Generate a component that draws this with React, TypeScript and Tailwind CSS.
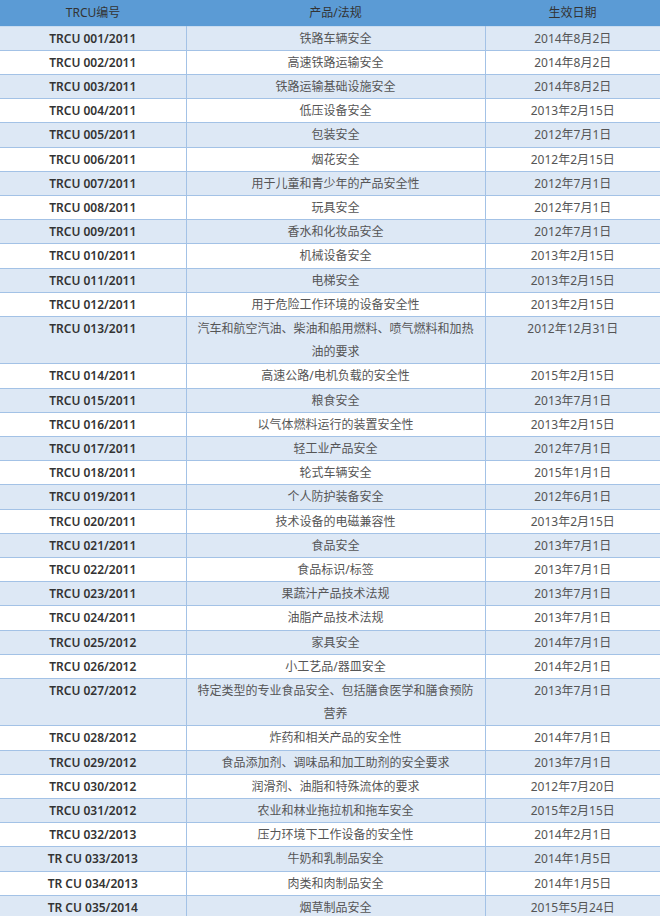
import React from 'react';

type Row = [string, string, string];

const rows: Row[] = [
  ['TRCU 001/2011', '铁路车辆安全', '2014年8月2日'],
  ['TRCU 002/2011', '高速铁路运输安全', '2014年8月2日'],
  ['TRCU 003/2011', '铁路运输基础设施安全', '2014年8月2日'],
  ['TRCU 004/2011', '低压设备安全', '2013年2月15日'],
  ['TRCU 005/2011', '包装安全', '2012年7月1日'],
  ['TRCU 006/2011', '烟花安全', '2012年2月15日'],
  ['TRCU 007/2011', '用于儿童和青少年的产品安全性', '2012年7月1日'],
  ['TRCU 008/2011', '玩具安全', '2012年7月1日'],
  ['TRCU 009/2011', '香水和化妆品安全', '2012年7月1日'],
  ['TRCU 010/2011', '机械设备安全', '2013年2月15日'],
  ['TRCU 011/2011', '电梯安全', '2013年2月15日'],
  ['TRCU 012/2011', '用于危险工作环境的设备安全性', '2013年2月15日'],
  ['TRCU 013/2011', '汽车和航空汽油、柴油和船用燃料、喷气燃料和加热油的要求', '2012年12月31日'],
  ['TRCU 014/2011', '高速公路/电机负载的安全性', '2015年2月15日'],
  ['TRCU 015/2011', '粮食安全', '2013年7月1日'],
  ['TRCU 016/2011', '以气体燃料运行的装置安全性', '2013年2月15日'],
  ['TRCU 017/2011', '轻工业产品安全', '2012年7月1日'],
  ['TRCU 018/2011', '轮式车辆安全', '2015年1月1日'],
  ['TRCU 019/2011', '个人防护装备安全', '2012年6月1日'],
  ['TRCU 020/2011', '技术设备的电磁兼容性', '2013年2月15日'],
  ['TRCU 021/2011', '食品安全', '2013年7月1日'],
  ['TRCU 022/2011', '食品标识/标签', '2013年7月1日'],
  ['TRCU 023/2011', '果蔬汁产品技术法规', '2013年7月1日'],
  ['TRCU 024/2011', '油脂产品技术法规', '2013年7月1日'],
  ['TRCU 025/2012', '家具安全', '2014年7月1日'],
  ['TRCU 026/2012', '小工艺品/器皿安全', '2014年2月1日'],
  ['TRCU 027/2012', '特定类型的专业食品安全、包括膳食医学和膳食预防营养', '2013年7月1日'],
  ['TRCU 028/2012', '炸药和相关产品的安全性', '2014年7月1日'],
  ['TRCU 029/2012', '食品添加剂、调味品和加工助剂的安全要求', '2013年7月1日'],
  ['TRCU 030/2012', '润滑剂、油脂和特殊流体的要求', '2012年7月20日'],
  ['TRCU 031/2012', '农业和林业拖拉机和拖车安全', '2015年2月15日'],
  ['TRCU 032/2013', '压力环境下工作设备的安全性', '2014年2月1日'],
  ['TR CU 033/2013', '牛奶和乳制品安全', '2014年1月5日'],
  ['TR CU 034/2013', '肉类和肉制品安全', '2014年1月5日'],
  ['TR CU 035/2014', '烟草制品安全', '2015年5月24日'],
];

export default function App() {
  return (
    <div className="w-[660px] h-[916px] overflow-hidden bg-white font-['Noto_Sans','Noto_Sans_CJK_SC',sans-serif] text-[12px]">
      <table className="w-[660px] border-collapse table-fixed">
        <colgroup>
          <col className="w-[186px]" />
          <col className="w-[299px]" />
          <col className="w-[175px]" />
        </colgroup>
        <thead>
          <tr className="bg-[#5b9bd5] text-[#333] border-b border-[#c9dcf0]">
            <th className="h-[26px] font-normal text-center align-middle">TRCU编号</th>
            <th className="h-[26px] font-normal text-center align-middle">产品/法规</th>
            <th className="h-[26px] font-normal text-center align-middle">生效日期</th>
          </tr>
        </thead>
        <tbody>
          {rows.map((r, i) => (
            <tr
              key={r[0]}
              className={`border-b border-[#a3c2e6] ${i % 2 === 0 ? 'bg-[#dde8f5]' : 'bg-white'}`}
            >
              <td className="px-2 leading-[23.2px] text-center align-top font-semibold text-[#333] border-r border-[#a3c2e6]">
                {r[0]}
              </td>
              <td className="px-2 leading-[23.2px] text-center align-top text-[#555] border-r border-[#a3c2e6]">
                {r[1]}
              </td>
              <td className="px-2 leading-[23.2px] text-center align-top text-[#555]">{r[2]}</td>
            </tr>
          ))}
        </tbody>
      </table>
    </div>
  );
}
